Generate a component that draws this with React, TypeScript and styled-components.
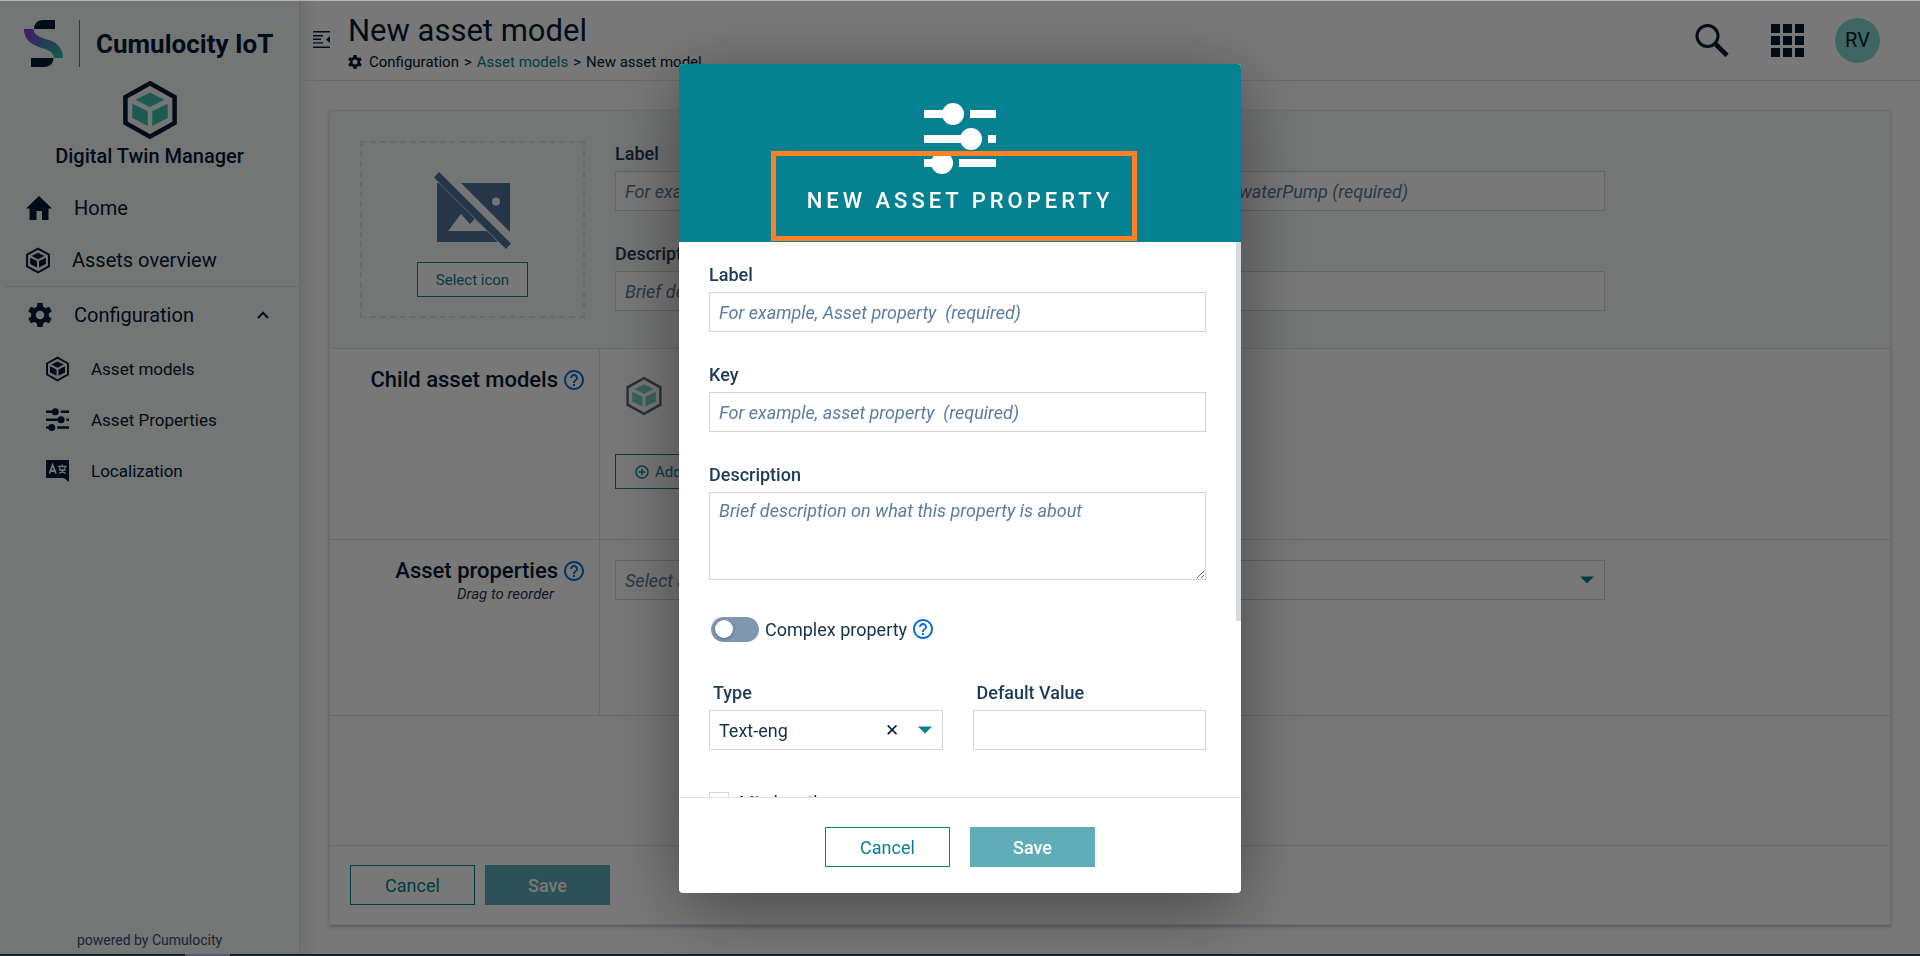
import React from 'react';
import styled, { createGlobalStyle, css } from 'styled-components';
import { MdHelpOutline, MdAddCircleOutline } from 'react-icons/md';

const color = {
  ink: '#001b33',
  text: '#14304d',
  label: '#1c3a5a',
  muted: '#5a7c9e',
  brand: '#068192',
  brandSoft: '#5fadb8',
  mint: '#3cbfae',
  help: '#0a6cd6',
  line: '#dde2e6',
  field: '#cfd6de',
  panel: '#f6f9f8',
};

const GlobalStyle = createGlobalStyle`
  *, *::before, *::after { box-sizing: border-box; }
  body {
    margin: 0;
    background: #fff;
    color: ${color.text};
    font-family: Roboto, "Liberation Sans", sans-serif;
    font-size: 18px;
  }
  h1, h2, p, ul { margin: 0; padding: 0; font-weight: 400; }
  button, input, textarea, select { font: inherit; color: inherit; }
  svg { display: block; flex: none; }
`;

/* ---------- icons ---------- */

const Hexagon = ({ size, fill, stroke = 'currentColor', weight = 3 }: { size: number; fill: string; stroke?: string; weight?: number }) => (
  <svg width={Math.round(size * 0.9)} height={size} viewBox="2 0 36 40" fill={fill} aria-hidden="true">
    <path d="M20 2.2 36.4 11.3V28.7L20 37.8 3.6 28.7V11.3Z" fill="none" stroke={stroke} strokeWidth={weight} />
    <path d="M20 8.3 29.6 13.1 20 18 10.4 13.1Z" />
    <path d="M8.2 15.8 18.5 20.8V30.6L8.2 25.4Z" />
    <path d="M31.8 15.8 21.5 20.8V30.6L31.8 25.4Z" />
  </svg>
);

const Gear = ({ size }: { size: number }) => (
  <svg width={size} height={size} viewBox="0 0 24 24" fill="currentColor" aria-hidden="true">
    <circle cx="12" cy="12" r="6.6" fill="none" stroke="currentColor" strokeWidth="4.6" />
    {[0, 60, 120, 180, 240, 300].map((a) => (
      <path key={a} d="M9.4 0H14.6L15.4 5H8.6Z" transform={`rotate(${a} 12 12)`} />
    ))}
  </svg>
);

const Sliders = ({ size }: { size: number }) => (
  <svg width={size} height={size} viewBox="0 0 72 72" fill="currentColor" aria-hidden="true">
    <path d="M0 8h20v8H0zM46 8h26v8H46zM0 33h38v8H0zM64 33h8v8h-8zM0 57h10v8H0zM35 57h37v8H35z" />
    <circle cx="29" cy="12" r="11" />
    <circle cx="47" cy="37" r="11" />
    <circle cx="18" cy="61" r="11" />
  </svg>
);

const HomeIcon = () => (
  <svg width="26" height="24" viewBox="0 0 26 24" fill="currentColor" aria-hidden="true">
    <path d="M13 0 26 12.5H22.5V24H16V15H10.5V24H3.5V12.5H0Z" />
  </svg>
);

const LocaleIcon = () => (
  <svg width="23" height="22" viewBox="0 0 23 22" aria-hidden="true">
    <path d="M0 0H23V22L18 18H0Z" fill="currentColor" />
    <path d="M3.5 13.5 6.7 5 10 13.5M4.8 11H8.8" fill="none" stroke={color.panel} strokeWidth="1.8" />
    <path d="M12 6.5H20.5M16.2 4.5V6.5M13.8 7.5V10H18.8V7.5M13 13.5 18.5 10M19.8 13.5 14.5 10" fill="none" stroke={color.panel} strokeWidth="1.3" />
  </svg>
);

const Chevron = () => (
  <svg width="12" height="8" viewBox="0 0 12 8" aria-hidden="true">
    <path d="M1 7 6 1.8 11 7" fill="none" stroke="currentColor" strokeWidth="2" />
  </svg>
);

const CollapseIcon = () => (
  <svg width="17" height="17" viewBox="0 0 17 17" fill="currentColor" aria-hidden="true">
    <path d="M0 0H17V1.5H0zM0 4H10V5.4H0zM0 7.6H8V9H0zM0 11.2H10V12.6H0zM0 15.5H17V17H0zM17 5V12L13 8.5z" />
  </svg>
);

const LogoMark = () => (
  <svg width="39" height="47" viewBox="0 0 39 47" aria-hidden="true">
    <defs>
      <linearGradient id="ribbon" x1="0" y1="0" x2="1" y2="0.9">
        <stop offset="0" stopColor="#9a2bff" />
        <stop offset="0.5" stopColor="#4f7fb0" />
        <stop offset="1" stopColor="#2bbfa4" />
      </linearGradient>
    </defs>
    <path d="M31 0V9H10C10 4 13 0 19 0Z" fill={color.ink} />
    <path d="M7 38H29.500C29.500 43 26 47 20 47H7Z" fill={color.ink} />
    <path d="M0 9H9.500C10 15 16 17.500 23 19.500C33 22 39 28 39 38H30C29.500 31 22 29.500 15 27C5 23.500 0 18 0 9Z" fill="url(#ribbon)" />
  </svg>
);

const SearchIcon = () => (
  <svg width="34" height="33" viewBox="0 0 34 33" fill="none" stroke="currentColor" aria-hidden="true">
    <circle cx="12.500" cy="12" r="10.500" strokeWidth="3" />
    <path d="M19.500 19 22 21.500" strokeWidth="3" />
    <path d="M21 20.500 32 31.500" strokeWidth="4.600" />
  </svg>
);

const GridIcon = () => (
  <svg width="33" height="33" viewBox="0 0 33 33" fill="currentColor" aria-hidden="true">
    {[0, 12, 24].map((y) => [0, 12, 24].map((x) => <rect key={`${x}-${y}`} x={x} y={y} width="9" height="9" />))}
  </svg>
);

const NoImageIcon = () => (
  <svg width="78" height="78" viewBox="0 0 78 78" fill="currentColor" aria-hidden="true">
    <path d="M3 11H5L64 70H3ZM14 59H53L40.500 47 36 52 27 42Z" fillRule="evenodd" />
    <path d="M27 11H76V60ZM62 25.500A4 4 0 1 0 62 33.500 4 4 0 1 0 62 25.500Z" fillRule="evenodd" />
    <path d="M0 5.500 5 0 77 71.500 72 77Z" />
  </svg>
);

const Caret = () => (
  <svg width="14" height="8" viewBox="0 0 14 8" fill={color.brand} aria-hidden="true">
    <path d="M0 0.500H14L7 7.500Z" />
  </svg>
);

/* ---------- shell ---------- */

const Shell = styled.div`
  display: flex;
  min-height: 100vh;
`;

const Sidebar = styled.aside`
  display: flex;
  flex-direction: column;
  flex: 0 0 300px;
  padding-top: 21px;
  background: ${color.panel};
  border-right: 1px solid ${color.line};
  box-shadow: 0 0 20px rgba(20, 40, 80, 0.22);
  color: ${color.ink};
`;

const Brand = styled.div`
  display: flex;
  align-items: center;
  gap: 16px;
  height: 47px;
  padding: 0 0 2px 24px;
  font-size: 26px;
  font-weight: 700;
  white-space: nowrap;
`;

const BrandRule = styled.span`
  width: 1px;
  height: 47px;
  background: ${color.muted};
`;

const BrandName = styled.span`
  position: relative;
  &::after {
    content: '';
    position: absolute;
    top: 2px;
    right: 0;
    width: 2px;
    height: 3px;
    background: #ffff00;
  }
`;

const AppBadge = styled.div`
  display: flex;
  flex-direction: column;
  align-items: center;
  gap: 2px;
  padding-top: 12px;
  font-size: 20px;
  font-weight: 500;
  line-height: 28px;
`;

const NavList = styled.ul`
  list-style: none;
  padding-top: 12px;
`;

const NavItem = styled.li<{ $divided?: boolean }>`
  ${(p) => p.$divided && css`
    margin-left: 5px;
    border-top: 1px solid ${color.line};
    a { padding-left: 23px; height: 56px; }
  `}
`;

const NavLink = styled.a<{ $sub?: boolean }>`
  display: flex;
  align-items: center;
  gap: 22px;
  height: ${(p) => (p.$sub ? 51 : 52)}px;
  padding: 0 30px 0 ${(p) => (p.$sub ? 46 : 26)}px;
  color: inherit;
  text-decoration: none;
  font-size: ${(p) => (p.$sub ? 17 : 20)}px;
`;

const NavText = styled.span`
  flex: 1;
`;

const Powered = styled.p`
  margin-top: auto;
  padding: 0 0 6px;
  font-size: 14px;
  line-height: 20px;
  text-align: center;
  color: #34547a;
`;

const Main = styled.main`
  display: flex;
  flex-direction: column;
  flex: 1;
  min-width: 0;
`;

const TopBar = styled.header`
  display: flex;
  align-items: center;
  height: 81px;
  padding: 0 40px 2px 13px;
  border-bottom: 1px solid ${color.line};
  color: ${color.ink};
`;

const IconButton = styled.button`
  display: flex;
  padding: 0;
  border: 0;
  background: none;
`;

const TitleBlock = styled.div`
  flex: 1;
  padding: 4px 0 0 18px;
`;

const PageTitle = styled.h1`
  font-size: 31px;
  font-weight: 400;
  line-height: 42px;
`;

const Crumbs = styled.nav`
  display: flex;
  align-items: center;
  gap: 5px;
  font-size: 15px;
  line-height: 20px;
  svg { margin-right: 2px; }
  a { color: ${color.brand}; text-decoration: none; }
`;

const Actions = styled.div`
  display: flex;
  align-items: center;
  gap: 42px;
  padding-top: 2px;
`;

const Avatar = styled.button`
  width: 45px;
  height: 45px;
  margin-left: -11px;
  padding: 0;
  border: 0;
  border-radius: 50%;
  background: #86d9d0;
  font-size: 20px;
`;

/* ---------- asset model card ---------- */

const Card = styled.section`
  display: flex;
  flex-direction: column;
  margin: 29px;
  border: 1px solid #e6eaed;
  background: #fff;
  box-shadow: 0 2px 3px rgba(20, 50, 90, 0.3);
`;

const Overview = styled.div`
  display: flex;
  gap: 30px;
  padding: 30px 285px 30px 30px;
  height: 237px;
  background: ${color.panel};
`;

const IconPicker = styled.div`
  display: flex;
  flex-direction: column;
  align-items: center;
  gap: 12px;
  width: 225px;
  height: 177px;
  padding-top: 29px;
  border: 2px dashed ${color.line};
  color: #4f7399;
`;

const Button = styled.button<{ $primary?: boolean; $small?: boolean }>`
  display: inline-flex;
  align-items: center;
  justify-content: center;
  gap: 5px;
  height: ${(p) => (p.$small ? 35 : 40)}px;
  min-width: ${(p) => (p.$small ? 0 : 125)}px;
  padding: 0 18px;
  border: 1px solid ${color.brand};
  background: #fff;
  color: ${color.brand};
  font-size: ${(p) => (p.$small ? 15 : 18)}px;
  white-space: nowrap;
  ${(p) => p.$primary && css`
    border-color: ${color.brandSoft};
    background: ${color.brandSoft};
    color: #fff;
    font-weight: 500;
  `}
`;

const FieldGrid = styled.div`
  display: grid;
  grid-template-columns: 1fr 1fr;
  align-content: start;
  flex: 1;
  gap: 30px;
`;

const Field = styled.div<{ $wide?: boolean; $indent?: boolean }>`
  display: flex;
  flex-direction: column;
  gap: 4px;
  min-width: 0;
  ${(p) => p.$wide && css`grid-column: 1 / -1;`}
  label {
    padding-left: ${(p) => (p.$indent ? 4 : 0)}px;
    line-height: 26px;
    font-weight: 500;
    color: ${color.label};
  }
`;

const control = css`
  width: 100%;
  padding: 0 9px;
  border: 1px solid ${color.field};
  border-radius: 0;
  background: #fff;
  &::placeholder { color: ${color.muted}; font-style: italic; opacity: 1; }
`;

const Input = styled.input`
  ${control}
  height: 40px;
`;

const TextArea = styled.textarea`
  ${control}
  display: block;
  height: 88px;
  padding: 5px 9px;
  line-height: 26px;
  resize: vertical;
`;

const SelectBox = styled.div`
  position: relative;
`;

const Select = styled.select<{ $empty?: boolean }>`
  ${control}
  height: 40px;
  appearance: none;
  ${(p) => p.$empty && css`color: ${color.muted}; font-style: italic;`}
`;

const SelectTools = styled.div`
  position: absolute;
  top: 0;
  right: 11px;
  display: flex;
  align-items: center;
  gap: 19px;
  height: 40px;
  pointer-events: none;
`;

const ClearButton = styled.button`
  padding: 0;
  border: 0;
  background: none;
  color: ${color.ink};
  font-size: 17px;
  line-height: 20px;
  pointer-events: auto;
`;

const Row = styled.div<{ $height: number }>`
  display: flex;
  min-height: ${(p) => p.$height}px;
  border-top: 1px solid ${color.line};
`;

const RowHead = styled.div`
  flex: 0 0 270px;
  padding: 18px 13px 0 0;
  border-right: 1px solid ${color.line};
`;

const RowTitle = styled.h2`
  display: flex;
  align-items: center;
  justify-content: flex-end;
  gap: 4px;
  font-size: 22px;
  font-weight: 500;
  line-height: 26px;
  color: ${color.ink};
`;

const RowHint = styled.p`
  padding-right: 32px;
  font-size: 15px;
  font-style: italic;
  line-height: 20px;
  text-align: right;
  color: ${color.label};
`;

const RowBody = styled.div`
  flex: 1;
  padding: 20px 285px 20px 15px;
`;

const ChildTypes = styled.div`
  padding: 7px 0 38px 11px;
  opacity: 0.7;
`;

const CardFooter = styled.footer`
  display: flex;
  gap: 10px;
  padding: 19px 20px;
  border-top: 1px solid ${color.line};
`;

const StatusStrip = styled.div`
  position: fixed;
  right: 0;
  bottom: 0;
  left: 0;
  height: 2px;
  padding-left: 185px;
  background: #16212e;
  &::after {
    content: '';
    display: block;
    width: 45px;
    height: 2px;
    background: #555b6a;
  }
`;

/* ---------- dialog ---------- */

const Backdrop = styled.div`
  position: fixed;
  inset: 0;
  display: flex;
  justify-content: center;
  align-items: flex-start;
  padding: 64px 0 63px;
  background: linear-gradient(rgba(0, 0, 0, 0.27) 1px, rgba(0, 0, 0, 0.53) 1px);
`;

const Dialog = styled.div`
  display: flex;
  flex-direction: column;
  width: 562px;
  max-height: 100%;
  border-radius: 4px;
  background: #fff;
  box-shadow: 0 14px 76px rgba(0, 0, 0, 0.42);
  overflow: hidden;
`;

const DialogHeader = styled.header`
  position: relative;
  display: flex;
  flex-direction: column;
  align-items: center;
  flex: none;
  gap: 12px;
  padding: 38px 0 26px;
  background: ${color.brand};
  color: #fff;
`;

const DialogTitle = styled.h2`
  font-size: 22px;
  font-weight: 500;
  line-height: 30px;
  letter-spacing: 4px;
  text-transform: uppercase;
`;

const Highlight = styled.div`
  position: absolute;
  bottom: 1px;
  left: 92px;
  width: 366px;
  height: 90px;
  border: 5px solid #ff8127;
`;

const DialogScroller = styled.div`
  position: relative;
  display: flex;
  min-height: 0;
  &::after {
    content: '';
    position: absolute;
    top: 0;
    right: 0;
    width: 5px;
    height: 379px;
    background: #d5dade;
  }
`;

const DialogBody = styled.form`
  display: grid;
  grid-template-columns: minmax(0, 1fr) minmax(0, 1fr);
  flex: 1;
  gap: 30px;
  padding: 20px 35px 30px 30px;
  overflow-y: auto;
  scrollbar-width: none;
`;

const ToggleRow = styled.div`
  grid-column: 1 / -1;
  display: flex;
  align-items: center;
  height: 40px;
  padding: 0 0 2px 2px;
  label { padding: 0 4px 0 6px; }
`;

const Switch = styled.input`
  appearance: none;
  display: flex;
  align-items: center;
  width: 48px;
  height: 25px;
  margin: 0;
  padding: 0 4px;
  border-radius: 13px;
  background: #8096b0;
  &::before {
    content: '';
    width: 18px;
    height: 18px;
    border-radius: 50%;
    background: #fff;
    box-shadow: 0 1px 3px rgba(0, 20, 50, 0.4);
  }
  &:checked { justify-content: flex-end; background: ${color.brand}; }
`;

const CheckRow = styled.div`
  grid-column: 1 / -1;
  display: flex;
  align-items: center;
  gap: 10px;
  height: 44px;
`;

const Checkbox = styled.input`
  appearance: none;
  width: 20px;
  height: 20px;
  margin: 0;
  border: 1px solid ${color.field};
  background: #fff;
  &:checked { background: ${color.brand}; }
`;

const DialogFooter = styled.footer`
  display: flex;
  flex: none;
  justify-content: center;
  gap: 20px;
  padding: 29px 0 26px;
  border-top: 1px solid #dfe4e9;
`;

export default function App() {
  return (
    <>
      <GlobalStyle />
      <Shell>
        <Sidebar>
          <Brand>
            <LogoMark />
            <BrandRule />
            <BrandName>Cumulocity IoT</BrandName>
          </Brand>
          <AppBadge>
            <Hexagon size={60} fill={color.mint} />
            <span>Digital Twin Manager</span>
          </AppBadge>
          <NavList>
            <NavItem>
              <NavLink href="#home">
                <HomeIcon />
                <NavText>Home</NavText>
              </NavLink>
            </NavItem>
            <NavItem>
              <NavLink href="#assets">
                <Hexagon size={27} fill="currentColor" />
                <NavText>Assets overview</NavText>
              </NavLink>
            </NavItem>
            <NavItem $divided>
              <NavLink href="#configuration">
                <Gear size={24} />
                <NavText>Configuration</NavText>
                <Chevron />
              </NavLink>
            </NavItem>
            <NavItem>
              <NavLink $sub href="#models">
                <Hexagon size={26} fill="currentColor" />
                <NavText>Asset models</NavText>
              </NavLink>
            </NavItem>
            <NavItem>
              <NavLink $sub href="#properties">
                <Sliders size={23} />
                <NavText>Asset Properties</NavText>
              </NavLink>
            </NavItem>
            <NavItem>
              <NavLink $sub href="#localization">
                <LocaleIcon />
                <NavText>Localization</NavText>
              </NavLink>
            </NavItem>
          </NavList>
          <Powered>powered by Cumulocity</Powered>
        </Sidebar>

        <Main>
          <TopBar>
            <IconButton aria-label="Collapse navigation"><CollapseIcon /></IconButton>
            <TitleBlock>
              <PageTitle>New asset model</PageTitle>
              <Crumbs aria-label="Breadcrumb">
                <Gear size={14} />
                <span>Configuration</span>
                <span>&gt;</span>
                <a href="#models">Asset models</a>
                <span>&gt;</span>
                <span>New asset model</span>
              </Crumbs>
            </TitleBlock>
            <Actions>
              <IconButton aria-label="Search"><SearchIcon /></IconButton>
              <IconButton aria-label="Applications"><GridIcon /></IconButton>
              <Avatar>RV</Avatar>
            </Actions>
          </TopBar>

          <Card>
            <Overview>
              <IconPicker>
                <NoImageIcon />
                <Button $small>Select icon</Button>
              </IconPicker>
              <FieldGrid>
                <Field>
                  <label htmlFor="model-label">Label</label>
                  <Input id="model-label" placeholder="For example, Water pump (required)" />
                </Field>
                <Field>
                  <label htmlFor="model-key">Key</label>
                  <Input id="model-key" placeholder="For example, waterPump (required)" />
                </Field>
                <Field $wide>
                  <label htmlFor="model-description">Description</label>
                  <Input id="model-description" placeholder="Brief description on what this asset is about" />
                </Field>
              </FieldGrid>
            </Overview>

            <Row $height={191}>
              <RowHead>
                <RowTitle>Child asset models <MdHelpOutline size={24} color={color.help} /></RowTitle>
              </RowHead>
              <RowBody>
                <ChildTypes><Hexagon size={40} fill={color.mint} weight={2.5} /></ChildTypes>
                <Button $small><MdAddCircleOutline size={16} />Add asset model</Button>
              </RowBody>
            </Row>
            <Row $height={176}>
              <RowHead>
                <RowTitle>Asset properties <MdHelpOutline size={24} color={color.help} /></RowTitle>
                <RowHint>Drag to reorder</RowHint>
              </RowHead>
              <RowBody>
                <SelectBox>
                  <Select $empty aria-label="Asset property" defaultValue="">
                    <option value="">Select asset property</option>
                  </Select>
                  <SelectTools><Caret /></SelectTools>
                </SelectBox>
              </RowBody>
            </Row>
            <Row $height={130} />
            <CardFooter>
              <Button>Cancel</Button>
              <Button $primary>Save</Button>
            </CardFooter>
          </Card>
        </Main>
      </Shell>

      <Backdrop>
        <Dialog role="dialog" aria-modal="true" aria-labelledby="dialog-title">
          <DialogHeader>
            <Sliders size={72} />
            <DialogTitle id="dialog-title">New asset property</DialogTitle>
            <Highlight />
          </DialogHeader>
          <DialogScroller>
            <DialogBody>
              <Field $wide>
                <label htmlFor="label">Label</label>
                <Input id="label" placeholder="For example, Asset property  (required)" />
              </Field>
              <Field $wide>
                <label htmlFor="key">Key</label>
                <Input id="key" placeholder="For example, asset property  (required)" />
              </Field>
              <Field $wide>
                <label htmlFor="description">Description</label>
                <TextArea id="description" placeholder="Brief description on what this property is about" />
              </Field>
              <ToggleRow>
                <Switch type="checkbox" role="switch" id="complex" />
                <label htmlFor="complex">Complex property</label>
                <MdHelpOutline size={24} color={color.help} />
              </ToggleRow>
              <Field $indent>
                <label htmlFor="type">Type</label>
                <SelectBox>
                  <Select id="type">
                    <option>Text-eng</option>
                  </Select>
                  <SelectTools>
                    <ClearButton type="button" aria-label="Clear type">✕</ClearButton>
                    <Caret />
                  </SelectTools>
                </SelectBox>
              </Field>
              <Field $indent>
                <label htmlFor="default">Default Value</label>
                <Input id="default" />
              </Field>
              <CheckRow>
                <Checkbox type="checkbox" id="min-length" />
                <label htmlFor="min-length">Min length</label>
              </CheckRow>
            </DialogBody>
          </DialogScroller>
          <DialogFooter>
            <Button>Cancel</Button>
            <Button $primary>Save</Button>
          </DialogFooter>
        </Dialog>
      </Backdrop>
      <StatusStrip />
    </>
  );
}
